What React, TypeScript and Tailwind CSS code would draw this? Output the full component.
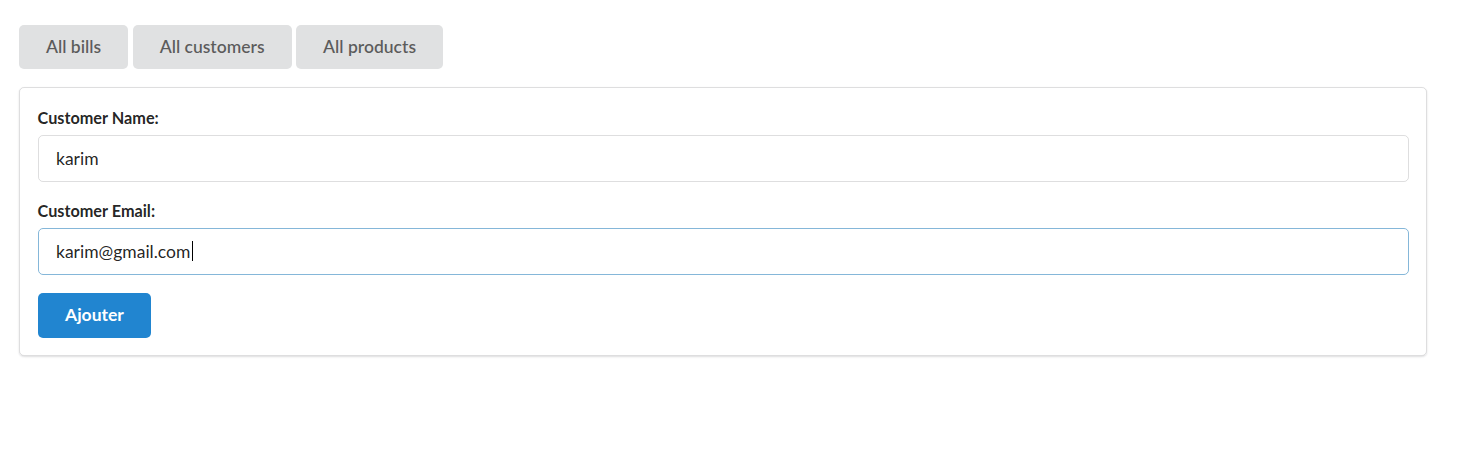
import { useEffect, useRef } from 'react';

const tabs = ['All bills', 'All customers', 'All products'];

export default function App() {
    const emailRef = useRef<HTMLInputElement>(null);

    useEffect(() => {
        const el = emailRef.current;
        if (!el) return;
        el.focus();
        el.setSelectionRange(el.value.length, el.value.length);
    }, []);

    return (
        <div className="min-h-screen bg-white font-['Lato','Liberation_Sans',sans-serif] px-[19px] pt-[25px]">
            {/* Tabs */}
            <div className="flex gap-[4.5px]">
                {tabs.map(t => (
                    <button
                        key={t}
                        className="h-[44px] px-[27px] bg-[#e0e1e2] text-[rgba(0,0,0,0.6)] text-[17.5px] font-semibold rounded-[5px] leading-none"
                    >
                        {t}
                    </button>
                ))}
            </div>

            {/* Form segment */}
            <div className="mt-[18px] w-[1408px] border border-[rgba(34,36,38,0.15)] rounded-[5px] shadow-[0_1px_2px_0_rgba(34,36,38,0.15)] p-[17.5px]">
                <div className="mb-[17.5px]">
                    <label className="block text-[16.25px] font-bold text-[rgba(0,0,0,0.87)] leading-[23px] mb-[6px]">Customer Name:</label>
                    <input
                        defaultValue="karim"
                        className="block w-full h-[47px] px-[17.5px] text-[17.5px] text-[rgba(0,0,0,0.87)] border border-[rgba(34,36,38,0.15)] rounded-[5px] outline-none"
                    />
                </div>
                <div className="mb-[17.5px]">
                    <label className="block text-[16.25px] font-bold text-[rgba(0,0,0,0.87)] leading-[23px] mb-[6px]">Customer Email:</label>
                    <div className="relative">
                        <input
                            ref={emailRef}
                            defaultValue="karim@gmail.com"
                            className="block w-full h-[47px] px-[17.5px] text-[17.5px] text-[rgba(0,0,0,0.87)] border border-[#85b7d9] rounded-[5px] outline-none caret-transparent"
                        />
                        {/* text caret */}
                        <span className="absolute left-[154px] top-[13px] w-px h-[20px] bg-black pointer-events-none" />
                    </div>
                </div>
                <button className="h-[45px] px-[27.5px] bg-[#2185d0] text-white text-[17.5px] font-bold rounded-[5px] leading-none">
                    Ajouter
                </button>
            </div>
        </div>
    );
}
